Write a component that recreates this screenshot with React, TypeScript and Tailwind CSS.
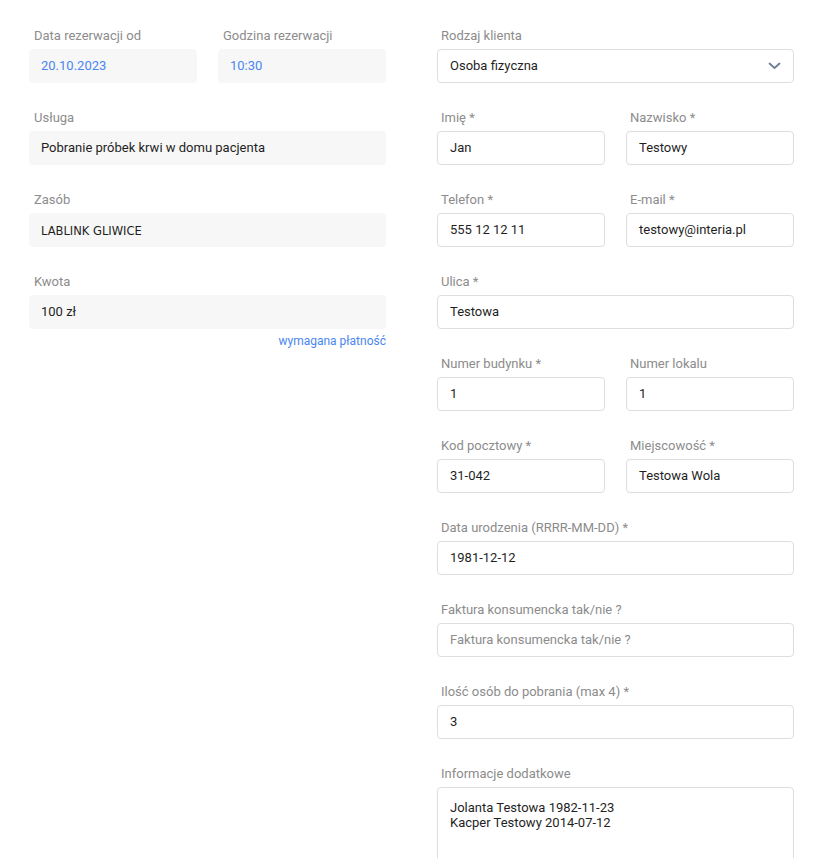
const font = { fontFamily: 'Roboto, "Noto Sans", sans-serif' };

type FieldProps = {
  label: string;
  value?: string;
  placeholder?: string;
  blue?: boolean;
  mono?: boolean;
  right?: boolean;
};

function Label({ text, right }: { text: string; right?: boolean }) {
  return (
    <div
      className={`h-[18px] leading-[18px] text-[13px] text-[#8c8c8c] mb-1 whitespace-nowrap ${
        right ? 'pl-[4px]' : 'pl-[5px]'
      }`}
    >
      {text}
    </div>
  );
}

// grey, read-only boxes on the left
function ReadField({ label, value, blue, mono }: FieldProps) {
  return (
    <div className="mb-[26px]">
      <Label text={label} />
      <div
        className={`h-[34px] rounded-[4px] bg-[#f7f7f7] flex items-center pl-3 ${
          blue ? 'text-[#4a86f0]' : 'text-[#1f1f1f]'
        } ${mono ? 'text-[11.5px] pt-[4px]' : 'text-[13px]'}`}
        style={mono ? { fontFamily: '"DejaVu Sans", Verdana, sans-serif' } : undefined}
      >
        {value}
      </div>
    </div>
  );
}

// white, bordered inputs on the right
function InputField({ label, value, placeholder }: FieldProps) {
  return (
    <div className="mb-[26px]">
      <Label text={label} right />
      <div className="h-[34px] rounded-[4px] border border-[#dedede] bg-white flex items-center pl-3 text-[13px]">
        {value ? (
          <span className="text-[#1f1f1f]">{value}</span>
        ) : (
          <span className="text-[#8c8c8c]">{placeholder}</span>
        )}
      </div>
    </div>
  );
}

function SelectField({ label, value }: FieldProps) {
  return (
    <div className="mb-[26px]">
      <Label text={label} right />
      <div className="h-[34px] rounded-[4px] border border-[#dedede] bg-white flex items-center justify-between pl-3 pr-[12px] text-[13px] text-[#1f1f1f]">
        <span>{value}</span>
        <svg width="13" height="8" viewBox="0 0 13 8" fill="none">
          <polyline
            points="1.5,1.5 6.5,6 11.5,1.5"
            stroke="#6f7f95"
            strokeWidth="1.8"
            strokeLinecap="round"
            strokeLinejoin="round"
          />
        </svg>
      </div>
    </div>
  );
}

function App() {
  return (
    <div className="bg-white min-h-[858px] overflow-hidden" style={font}>
      <div className="flex pt-[27px] pl-[29px] gap-[51px]">
        {/* Left column */}
        <div className="w-[357px]">
          <div className="grid grid-cols-2 gap-x-[21px]">
            <ReadField label="Data rezerwacji od" value="20.10.2023" blue />
            <ReadField label="Godzina rezerwacji" value="10:30" blue />
          </div>
          <ReadField label="Usługa" value="Pobranie próbek krwi w domu pacjenta" />
          <ReadField label="Zasób" value="LABLINK GLIWICE" mono />
          <div>
            <Label text="Kwota" />
            <div className="h-[34px] rounded-[4px] bg-[#f7f7f7] flex items-center pl-3 text-[13px] text-[#1f1f1f]">
              100 zł
            </div>
            <div className="text-right text-[12px] text-[#4a86f0] mt-[4px] leading-[16px]">
              wymagana płatność
            </div>
          </div>
        </div>

        {/* Right column */}
        <div className="w-[357px]">
          <SelectField label="Rodzaj klienta" value="Osoba fizyczna" />
          <div className="grid grid-cols-2 gap-x-[21px]">
            <InputField label="Imię *" value="Jan" />
            <InputField label="Nazwisko *" value="Testowy" />
            <InputField label="Telefon *" value="555 12 12 11" />
            <InputField label="E-mail *" value="testowy@interia.pl" />
          </div>
          <InputField label="Ulica *" value="Testowa" />
          <div className="grid grid-cols-2 gap-x-[21px]">
            <InputField label="Numer budynku *" value="1" />
            <InputField label="Numer lokalu" value="1" />
            <InputField label="Kod pocztowy *" value="31-042" />
            <InputField label="Miejscowość *" value="Testowa Wola" />
          </div>
          <InputField label="Data urodzenia (RRRR-MM-DD) *" value="1981-12-12" />
          <InputField
            label="Faktura konsumencka tak/nie ?"
            placeholder="Faktura konsumencka tak/nie ?"
          />
          <InputField label="Ilość osób do pobrania (max 4) *" value="3" />
          <div>
            <Label text="Informacje dodatkowe" right />
            <div className="h-[110px] rounded-[4px] border border-[#dedede] bg-white pl-3 pt-[12px] text-[13px] leading-[15px] text-[#1f1f1f]">
              <div>Jolanta Testowa 1982-11-23</div>
              <div>Kacper Testowy 2014-07-12</div>
            </div>
          </div>
        </div>
      </div>
    </div>
  );
}

export default App;
